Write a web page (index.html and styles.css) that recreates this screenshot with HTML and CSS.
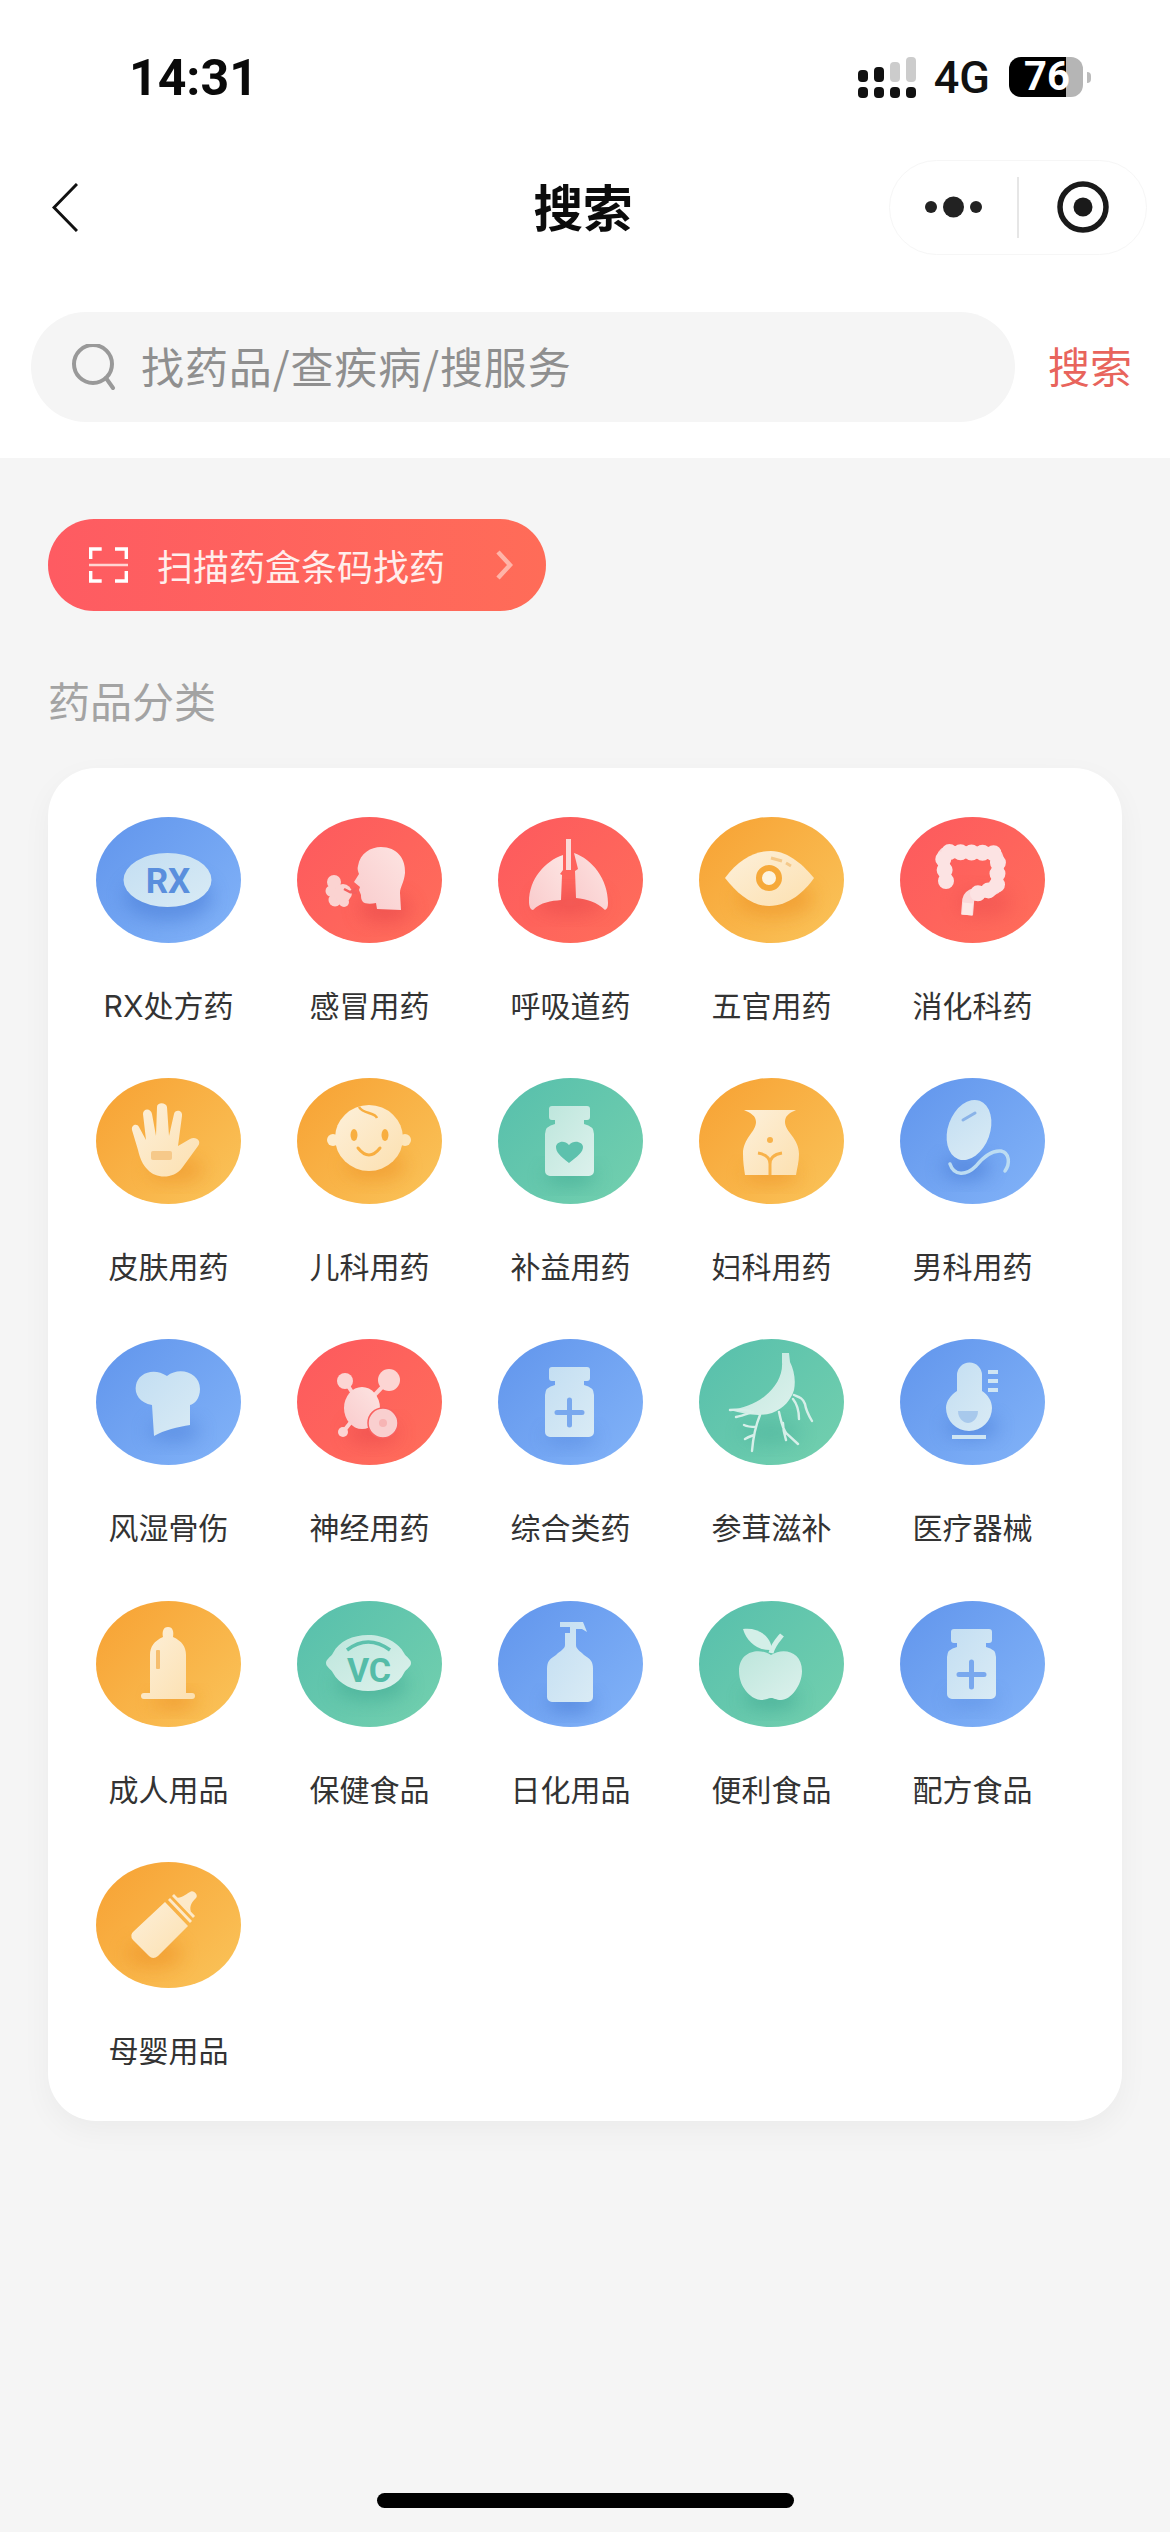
FILE: index.html
```html
<!DOCTYPE html>
<html lang="zh-CN">
<head>
<meta charset="utf-8">
<title>搜索</title>
<link rel="stylesheet" href="styles.css">
</head>
<body>
<svg class="defs" aria-hidden="true">
  <defs>
    <linearGradient id="gb" x1="0" y1="0" x2="1" y2="1"><stop offset="0" stop-color="#c3def2"/><stop offset="1" stop-color="#d9ebf5"/></linearGradient>
    <linearGradient id="gr" x1="1" y1="0" x2="0" y2="1"><stop offset="0" stop-color="#fde4e2"/><stop offset="1" stop-color="#f9cbcc"/></linearGradient>
    <linearGradient id="go" x1="0" y1="0" x2="1" y2="1"><stop offset="0" stop-color="#fdf0da"/><stop offset="1" stop-color="#fce0b0"/></linearGradient>
    <linearGradient id="gg" x1="0" y1="0" x2="1" y2="1"><stop offset="0" stop-color="#bde6dc"/><stop offset="1" stop-color="#dcf1ec"/></linearGradient>
    <filter id="s" x="-50%" y="-50%" width="200%" height="200%"><feGaussianBlur stdDeviation="9"/></filter>
  </defs>
</svg>

<header class="top">
  <div class="status">
    <span class="time">14:31</span>
    <div class="status-right">
      <svg class="signal" viewBox="0 0 58 41" width="58" height="41">
        <rect x="0" y="13" width="10" height="12" rx="4" fill="#111"/>
        <rect x="16" y="10" width="10" height="15" rx="4" fill="#111"/>
        <rect x="32" y="5" width="10" height="20" rx="4" fill="#ccc"/>
        <rect x="48" y="0" width="10" height="25" rx="4" fill="#ccc"/>
        <rect x="0" y="30" width="10" height="11" rx="4" fill="#111"/>
        <rect x="16" y="30" width="10" height="11" rx="4" fill="#111"/>
        <rect x="32" y="30" width="10" height="11" rx="4" fill="#111"/>
        <rect x="48" y="30" width="10" height="11" rx="4" fill="#111"/>
      </svg>
      <span class="net">4G</span>
      <div class="batt"><span class="batt-num">76</span></div>
      <span class="nib"></span>
    </div>
  </div>

  <div class="nav">
    <svg class="back" viewBox="0 0 26 49" width="26" height="49"><path d="M25 1 2 24.500 25 48" fill="none" stroke="#111" stroke-width="3"/></svg>
    <h1 class="title">搜索</h1>
    <div class="capsule">
      <div class="cap-part">
        <svg viewBox="0 0 58 22" width="58" height="22"><circle cx="6" cy="11" r="6" fill="#222"/><circle cx="28.500" cy="11" r="10.500" fill="#222"/><circle cx="51" cy="11" r="6" fill="#222"/></svg>
      </div>
      <span class="cap-line"></span>
      <div class="cap-part">
        <svg viewBox="0 0 52 52" width="52" height="52"><circle cx="26" cy="26" r="23" fill="none" stroke="#1a1a1a" stroke-width="5.500"/><circle cx="26" cy="26" r="9.500" fill="#1a1a1a"/></svg>
      </div>
    </div>
  </div>

  <div class="search-row">
    <div class="search-box">
      <svg class="search-ico" viewBox="0 0 46 46" width="46" height="46"><circle cx="22" cy="20" r="19" fill="none" stroke="#999" stroke-width="4"/><path d="M35 34l7 10" fill="none" stroke="#999" stroke-width="4" stroke-linecap="round"/></svg>
      <span class="placeholder">找药品/查疾病/搜服务</span>
    </div>
    <span class="search-btn">搜索</span>
  </div>
</header>

<main class="main">
  <div class="scan">
    <svg class="scan-ico" viewBox="0 0 39 36" width="39" height="36"><path d="M1.700 12V2h11M26 2h11.300v10M1.700 24v10h11M26 34h11.300V24" fill="none" stroke="#fff" stroke-width="3.400"/><path d="M0 18h39" stroke="#ffd5d3" stroke-width="2.500"/></svg>
    <span class="scan-text">扫描药盒条码找药</span>
    <svg class="scan-arrow" viewBox="0 0 17 30" width="17" height="30"><path d="M2 2l12 13L2 28" fill="none" stroke="#ffb4a8" stroke-width="4.500"/></svg>
  </div>

  <h2 class="section">药品分类</h2>

  <section class="card">
    <div class="item">
      <div class="ico blue"><svg viewBox="0 0 145 126"><ellipse cx="72" cy="80" rx="44" ry="24" fill="#4d80d8" opacity=".6" filter="url(#s)"/><ellipse cx="71.500" cy="63" rx="44" ry="27" fill="url(#gb)"/><text x="72" y="76" class="ico-text" fill="#5a8fdd" text-anchor="middle" font-size="35">RX</text></svg></div>
      <div class="label">RX处方药</div>
    </div>
    <div class="item">
      <div class="ico red"><svg viewBox="0 0 145 126"><ellipse cx="88" cy="92" rx="26" ry="14" fill="#e8484c" opacity=".6" filter="url(#s)"/><path d="M61 49C63 36 74 30 84 30c16 0 25 12 24 26-1 10-5 14-5 20l1 17-24-1-1-6c-5 1-11 1-13-1-2-2-2-5-2-7l-2-5 1-3-6-5 5-8c-1-3-2-5-1-8z" fill="url(#gr)"/><g fill="#fbd3d1"><circle cx="37" cy="65" r="7"/><circle cx="34" cy="74" r="5.500"/><circle cx="38" cy="83" r="6.500"/><circle cx="46" cy="76" r="9"/><circle cx="47" cy="85" r="5"/></g><path d="M47 72l6 3 7-4M53 75l7 1" fill="none" stroke="#f4605f" stroke-width="2.500"/></svg></div>
      <div class="label">感冒用药</div>
    </div>
    <div class="item">
      <div class="ico red"><svg viewBox="0 0 145 126"><ellipse cx="72" cy="86" rx="34" ry="12" fill="#e8484c" opacity=".55" filter="url(#s)"/><path d="M68 22h5v31h-5z" fill="#fbd8d6"/><path d="M65 38C47 44 31 62 31 85c0 5 2 8 4 8 8-8 18-9 28-10l1-25-2-1 3-4z" fill="url(#gr)"/><path d="M76 36c18 6 34 26 34 50 0 4-1 6-3 7-8-8-18-11-29-12l-1-27 3-2z" fill="url(#gr)"/></svg></div>
      <div class="label">呼吸道药</div>
    </div>
    <div class="item">
      <div class="ico orange"><svg viewBox="0 0 145 126"><ellipse cx="76" cy="82" rx="38" ry="18" fill="#ec9226" opacity=".55" filter="url(#s)"/><path d="M26 61C40 42 56 34 72 34c18 0 34 16 43 27-9 13-25 28-45 28-18 0-32-13-44-28z" fill="url(#go)"/><circle cx="70" cy="61" r="10" fill="#fdf3df" stroke="#f6a93a" stroke-width="6"/><path d="M72 41l11 3M87 46l5 3" fill="none" stroke="#f5c98a" stroke-width="3"/></svg></div>
      <div class="label">五官用药</div>
    </div>
    <div class="item">
      <div class="ico red"><svg viewBox="0 0 145 126"><ellipse cx="84" cy="86" rx="28" ry="14" fill="#e8484c" opacity=".4" filter="url(#s)"/><path d="M46 64 43 40q1-5 7-5l43 1q5 2 5 8l-1 24q-1 4-7 5l-18 5q-4 2-4 8l-1 12" fill="none" stroke="#fbd9da" stroke-width="12" stroke-linejoin="round"/><path d="M46 64 43 40q1-5 7-5l43 1q5 2 5 8l-1 24q-1 4-7 5l-18 5" fill="none" stroke="#fce3e3" stroke-width="16" stroke-linecap="round" stroke-dasharray="0 11"/><path d="M68 86l-1 12" stroke="#fde8e6" stroke-width="10"/></svg></div>
      <div class="label">消化科药</div>
    </div>

    <div class="item">
      <div class="ico orange"><svg viewBox="0 0 145 126"><ellipse cx="80" cy="92" rx="28" ry="12" fill="#ec9226" opacity=".55" filter="url(#s)"/><path d="M52 92c-6-6-8-12-10-20l-6-20c-1-5 5-7 7-3l7 13-3-26c0-6 8-6 9 0l4 22 1-29c0-5 9-5 10 0l2 29 5-22c1-5 9-4 8 2l-4 30 12-7c6-3 12 2 8 7L86 90c-8 11-26 11-34 2z" fill="url(#go)"/><rect x="55" y="73" width="21" height="9" rx="2" fill="#f6c98a"/></svg></div>
      <div class="label">皮肤用药</div>
    </div>
    <div class="item">
      <div class="ico orange"><svg viewBox="0 0 145 126"><ellipse cx="78" cy="88" rx="30" ry="14" fill="#ec9226" opacity=".55" filter="url(#s)"/><circle cx="36" cy="62" r="6" fill="#fdeccd"/><circle cx="108" cy="62" r="6" fill="#fce6bd"/><ellipse cx="72" cy="60" rx="34" ry="33" fill="url(#go)"/><path d="M62 29c4 7 16 5 18 11" fill="none" stroke="#f8ae40" stroke-width="2.500"/><ellipse cx="57" cy="57" rx="3.500" ry="6" fill="#f8ae40"/><ellipse cx="88" cy="57" rx="3.500" ry="6" fill="#f8ae40"/><path d="M61 70q11 14 22 0" fill="none" stroke="#f8ae40" stroke-width="3" stroke-linecap="round"/></svg></div>
      <div class="label">儿科用药</div>
    </div>
    <div class="item">
      <div class="ico green"><svg viewBox="0 0 145 126"><ellipse cx="72" cy="98" rx="26" ry="10" fill="#3fa892" opacity=".55" filter="url(#s)"/><path d="M54 28h35a3 3 0 0 1 3 3v8a3 3 0 0 1-3 3h-3v4q10 2 10 10v37a5 5 0 0 1-5 5H52a5 5 0 0 1-5-5V56q0-8 10-10v-4h-3a3 3 0 0 1-3-3v-8a3 3 0 0 1 3-3z" fill="url(#gg)"/><path d="M71 85c-9-7-13-11-13-16 0-5 8-8 13-2 5-6 14-3 14 2 0 5-5 9-14 16z" fill="#5dc1ad"/></svg></div>
      <div class="label">补益用药</div>
    </div>
    <div class="item">
      <div class="ico orange"><svg viewBox="0 0 145 126"><ellipse cx="72" cy="96" rx="28" ry="10" fill="#ec9226" opacity=".55" filter="url(#s)"/><path d="M45 32h52c-7 3-11 6-11 12 0 10 14 16 14 32 0 8-2 14-3 21H46c-1-7-2-13-2-21 0-16 13-22 13-32 0-6-5-9-12-12z" fill="url(#go)"/><circle cx="71" cy="62" r="3" fill="#f8b24a"/><path d="M59 75c6 1 12 4 12 11 0-7 6-10 12-11M71 86v11" fill="none" stroke="#f8b24a" stroke-width="3"/></svg></div>
      <div class="label">妇科用药</div>
    </div>
    <div class="item">
      <div class="ico blue"><svg viewBox="0 0 145 126"><ellipse cx="66" cy="90" rx="24" ry="12" fill="#4d80d8" opacity=".7" filter="url(#s)"/><ellipse cx="69" cy="52" rx="21" ry="31" transform="rotate(20 69 52)" fill="url(#gb)"/><path d="M63 42l12-7" stroke="#8ab3e8" stroke-width="3" stroke-linecap="round"/><path d="M50 86c4 12 16 12 26 2 8-10 16-16 25-15 9 2 9 13 4 20" fill="none" stroke="#bcdcf2" stroke-width="3.500" stroke-linecap="round"/></svg></div>
      <div class="label">男科用药</div>
    </div>

    <div class="item">
      <div class="ico blue"><svg viewBox="0 0 145 126"><ellipse cx="78" cy="92" rx="26" ry="12" fill="#4d80d8" opacity=".5" filter="url(#s)"/><path d="M58 97 56 66c-12-2-18-11-16-20 2-12 18-18 31-9 13-10 33-3 33 13 0 10-6 15-10 16v20c-12 2-26 5-36 11z" fill="url(#gb)"/></svg></div>
      <div class="label">风湿骨伤</div>
    </div>
    <div class="item">
      <div class="ico red"><svg viewBox="0 0 145 126"><ellipse cx="76" cy="94" rx="26" ry="12" fill="#e8484c" opacity=".55" filter="url(#s)"/><path d="M48 42 65 69M92 41 65 69M46 93 65 69" stroke="#fbd3d3" stroke-width="4"/><circle cx="48" cy="42" r="8" fill="#fcd5d3"/><circle cx="92" cy="41" r="11" fill="#fcd5d3"/><circle cx="46" cy="93" r="5" fill="#fcd5d3"/><ellipse cx="65" cy="69" rx="18" ry="21" fill="url(#gr)"/><circle cx="86" cy="84" r="15" fill="#f9cfcf" stroke="#f9615f" stroke-width="1.500"/><circle cx="86" cy="84" r="4" fill="#f7b4b4"/></svg></div>
      <div class="label">神经用药</div>
    </div>
    <div class="item">
      <div class="ico blue"><svg viewBox="0 0 145 126"><ellipse cx="72" cy="98" rx="26" ry="10" fill="#4d80d8" opacity=".4" filter="url(#s)"/><path d="M54 28h35a3 3 0 0 1 3 3v8a3 3 0 0 1-3 3h-3v4q10 2 10 10v37a5 5 0 0 1-5 5H52a5 5 0 0 1-5-5V56q0-8 10-10v-4h-3a3 3 0 0 1-3-3v-8a3 3 0 0 1 3-3z" fill="url(#gb)"/><path d="M71.500 61v25M59 73.500h25" stroke="#79a8ee" stroke-width="5" stroke-linecap="round"/></svg></div>
      <div class="label">综合类药</div>
    </div>
    <div class="item">
      <div class="ico green"><svg viewBox="0 0 145 126"><ellipse cx="72" cy="94" rx="30" ry="12" fill="#3fa892" opacity=".35" filter="url(#s)"/><path d="M83 14h7l1 9c4 8 6 18 4 28-3 10-10 18-22 23-13 4-27 1-42-3 13-2 25-6 35-14 11-9 18-21 17-34z" fill="url(#gg)"/><path d="M31 71c7-1 13 0 20 1M37 78c6-1 11-3 17-5M95 56c5 2 9 3 11 9 1 7 4 12 7 17M94 60c4 5 6 10 6 20M80 73c2 8 3 17 8 22l11 10M84 84c0 6 1 11 3 17M61 76c-5 12-7 24-8 36M57 88c-4 0-8 0-12-2M55 96c-3 1-6 2-9 4" fill="none" stroke="#d6efe9" stroke-width="2.400" stroke-linecap="round"/></svg></div>
      <div class="label">参茸滋补</div>
    </div>
    <div class="item">
      <div class="ico blue"><svg viewBox="0 0 145 126"><ellipse cx="72" cy="88" rx="26" ry="12" fill="#4d80d8" opacity=".6" filter="url(#s)"/><path d="M57 36a12.500 12.500 0 0 1 25 0v16c6 4 10 10 10 17a23 23 0 0 1-46 0c0-7 5-13 11-17z" fill="url(#gb)"/><path d="M58 72h20c0 8-6 12-10 12s-10-4-10-12z" fill="#a8c9ec"/><path d="M88 33h10M88 42h10M88 51h10M52 98h34" stroke="#cfe5f3" stroke-width="4"/></svg></div>
      <div class="label">医疗器械</div>
    </div>

    <div class="item">
      <div class="ico orange"><svg viewBox="0 0 145 126"><ellipse cx="78" cy="100" rx="22" ry="9" fill="#ec9226" opacity=".6" filter="url(#s)"/><path d="M72 26c5 0 6 5 5 10 9 4 13 10 13 18v38h6a3 3 0 0 1 0 6H48a3 3 0 0 1 0-6h6V54c0-8 4-14 13-18-1-5 0-10 5-10z" fill="url(#go)"/><rect x="60" y="49" width="4" height="19" rx="1" fill="#f6be6e"/></svg></div>
      <div class="label">成人用品</div>
    </div>
    <div class="item">
      <div class="ico green"><svg viewBox="0 0 145 126"><ellipse cx="74" cy="84" rx="36" ry="16" fill="#3fa892" opacity=".55" filter="url(#s)"/><path d="M29 62c0-4 5-6 7-10 6-12 20-18 35-18 17 0 31 8 36 18 2 4 7 6 7 10s-5 6-7 10c-5 11-19 18-36 18-15 0-29-7-35-18-2-4-7-6-7-10z" fill="url(#gg)"/><path d="M50 49q21-16 43 0" fill="none" stroke="#5dc1ad" stroke-width="3.500"/><text x="72" y="81" class="ico-text" fill="#55bca8" text-anchor="middle" font-size="34">VC</text></svg></div>
      <div class="label">保健食品</div>
    </div>
    <div class="item">
      <div class="ico blue"><svg viewBox="0 0 145 126"><ellipse cx="72" cy="102" rx="24" ry="10" fill="#4d80d8" opacity=".7" filter="url(#s)"/><path d="M62 21h23l4 10-5-3h-6v16c0 4 4 6 8 10 6 4 9 6 9 14v28a5 5 0 0 1-5 5H54a5 5 0 0 1-5-5V68c0-8 3-10 9-14 4-4 9-6 9-10V32h5v-6H62z" fill="url(#gb)"/></svg></div>
      <div class="label">日化用品</div>
    </div>
    <div class="item">
      <div class="ico green"><svg viewBox="0 0 145 126"><ellipse cx="72" cy="98" rx="28" ry="11" fill="#3fa892" opacity=".6" filter="url(#s)"/><path d="M72 54c-12-8-32-4-32 16 0 18 14 29 22 29 5 0 7-2 10-2s5 2 10 2c10 0 21-15 21-29 0-20-19-24-31-16z" fill="url(#gg)"/><path d="M44 28c14-2 28 6 29 21-13 1-25-7-29-21z" fill="#d3efe8"/><path d="M72 52c2-8 6-12 11-18" fill="none" stroke="#d3efe8" stroke-width="5"/></svg></div>
      <div class="label">便利食品</div>
    </div>
    <div class="item">
      <div class="ico blue"><svg viewBox="0 0 145 126"><ellipse cx="72" cy="98" rx="26" ry="10" fill="#4d80d8" opacity=".3" filter="url(#s)"/><path d="M54 28h35a3 3 0 0 1 3 3v8a3 3 0 0 1-3 3h-3v4q10 2 10 10v37a5 5 0 0 1-5 5H52a5 5 0 0 1-5-5V56q0-8 10-10v-4h-3a3 3 0 0 1-3-3v-8a3 3 0 0 1 3-3z" fill="url(#gb)"/><path d="M71.500 61v25M59 73.500h25" stroke="#79a8ee" stroke-width="5" stroke-linecap="round"/></svg></div>
      <div class="label">配方食品</div>
    </div>

    <div class="item">
      <div class="ico orange"><svg viewBox="0 0 145 126"><ellipse cx="58" cy="92" rx="28" ry="14" fill="#ec9226" opacity=".55" filter="url(#s)"/><path d="M38 69l31-29 23 24-30 30q-5 4-9 0L37 78q-4-5 1-9z" fill="url(#go)"/><path d="M73 37l22 23M77 33l21 22" stroke="#fde9c8" stroke-width="2.800"/><path d="M80 36c5 0 9-3 14-6 3-3 9 3 6 6-4 4-7 8-5 14z" fill="#fde9c8"/></svg></div>
      <div class="label">母婴用品</div>
    </div>
  </section>

  <div class="home"></div>
</main>
</body>
</html>
```

FILE: styles.css
```css
* { box-sizing: border-box; margin: 0; padding: 0; }

html, body {
  background: #f5f5f5;
}

body {
  font-family: "Noto Sans CJK SC", "Noto Sans", sans-serif;
  color: #333;
}

.defs {
  display: block;
  width: 0;
  height: 0;
}

.top {
  background: #fff;
  height: 458px;
}

.status {
  height: 154px;
  padding: 0 79px 0 129px;
  display: flex;
  align-items: center;
  justify-content: space-between;
}

.time {
  font-family: Roboto, "Liberation Sans", sans-serif;
  font-size: 50px;
  font-weight: 700;
  color: #0a0a0a;
  line-height: 60px;
  margin-top: 2px;
}

.status-right {
  display: flex;
  align-items: center;
}

.net {
  font-family: Roboto, "Liberation Sans", sans-serif;
  font-size: 45px;
  font-weight: 500;
  line-height: 50px;
  color: #111;
  margin: 2px 19px 0 18px;
}

.batt {
  width: 74px;
  height: 40px;
  border-radius: 12px;
  background: linear-gradient(90deg, #000 77%, #b5b5b5 77%);
  padding-left: 15px;
  display: flex;
  align-items: center;
}

.batt-num {
  font-family: Roboto, "Liberation Sans", sans-serif;
  font-size: 40px;
  font-weight: 700;
  line-height: 40px;
  color: #fff;
}

.nib {
  width: 4px;
  height: 11px;
  margin-left: 4px;
  background: #bbb;
  border-radius: 0 4px 4px 0;
}

.nav {
  height: 106px;
  padding: 0 23px 0 19px;
  display: grid;
  grid-template-columns: 1fr auto 1fr;
  align-items: center;
}

.back {
  margin-left: 33px;
  display: block;
}

.title {
  font-size: 49.500px;
  font-weight: 700;
  line-height: 60px;
  color: #0c0c0c;
  margin-top: -3px;
}

.capsule {
  justify-self: end;
  width: 258px;
  height: 95px;
  border-radius: 48px;
  border: 1.5px solid #f6f6f6;
  display: flex;
  align-items: center;
}

.cap-part {
  flex: 1;
  display: flex;
  justify-content: center;
}

.cap-part svg {
  display: block;
}

.cap-part + .cap-line + .cap-part svg {
  margin-left: 2px;
}

.cap-line {
  width: 1.5px;
  height: 61px;
  background: #e6e6e6;
}

.search-row {
  margin-top: 52px;
  padding-left: 31px;
  display: flex;
  align-items: center;
}

.search-box {
  width: 984px;
  height: 110px;
  border-radius: 55px;
  background: #f5f5f5;
  padding-left: 40px;
  display: flex;
  align-items: center;
  gap: 24px;
}

.search-ico {
  display: block;
  flex: none;
}

.placeholder {
  font-size: 43px;
  letter-spacing: .9px;
  line-height: 60px;
  color: #8f8f8f;
  margin-top: -5px;
}

.search-btn {
  margin-left: 33px;
  font-size: 42px;
  line-height: 60px;
  color: #e8645c;
  margin-top: -5px;
}

.main {
  display: flow-root;
}

.scan {
  margin: 61px 0 0 48px;
  width: 498px;
  height: 92px;
  border-radius: 46px;
  background: linear-gradient(90deg, #fe5b62, #ff6c58);
  padding-left: 41px;
  display: flex;
  align-items: center;
}

.scan-ico {
  display: block;
  flex: none;
}

.scan-text {
  margin-left: 29px;
  font-size: 36px;
  line-height: 50px;
  color: #ffeeec;
}

.scan-arrow {
  display: block;
  margin-left: 51px;
}

.section {
  margin: 59px 0 0 48px;
  font-size: 42px;
  font-weight: 400;
  line-height: 60px;
  color: #a3a3a3;
}

.card {
  margin: 38px 48px 0;
  height: 1353px;
  border-radius: 48px;
  background: #fff;
  box-shadow: 0 10px 30px rgba(0, 0, 0, .045);
  padding: 49px 0 0 20px;
  display: grid;
  grid-template-columns: repeat(5, 201px);
  grid-auto-rows: 261.200px;
}

.item {
  display: flex;
  flex-direction: column;
  align-items: center;
}

.ico {
  width: 145px;
  height: 126px;
  border-radius: 50%;
  overflow: hidden;
}

.ico svg {
  display: block;
  width: 145px;
  height: 126px;
}

.ico-text {
  font-family: Roboto, "Liberation Sans", sans-serif;
  font-weight: 700;
}

.blue { background: linear-gradient(135deg, #6195ec, #82b3f8); }
.red { background: linear-gradient(135deg, #fd595e, #ff6e5a); }
.orange { background: linear-gradient(135deg, #f7a133, #fac45a); }
.green { background: linear-gradient(135deg, #57bfac, #73d0ae); }

.label {
  margin-top: 43px;
  font-family: Inter, "Noto Sans CJK SC", sans-serif;
  font-size: 30px;
  line-height: 40px;
  color: #333;
  white-space: nowrap;
}

.home {
  width: 417px;
  height: 15px;
  margin: 372px auto 0;
  border-radius: 8px;
  background: #000;
}
```
